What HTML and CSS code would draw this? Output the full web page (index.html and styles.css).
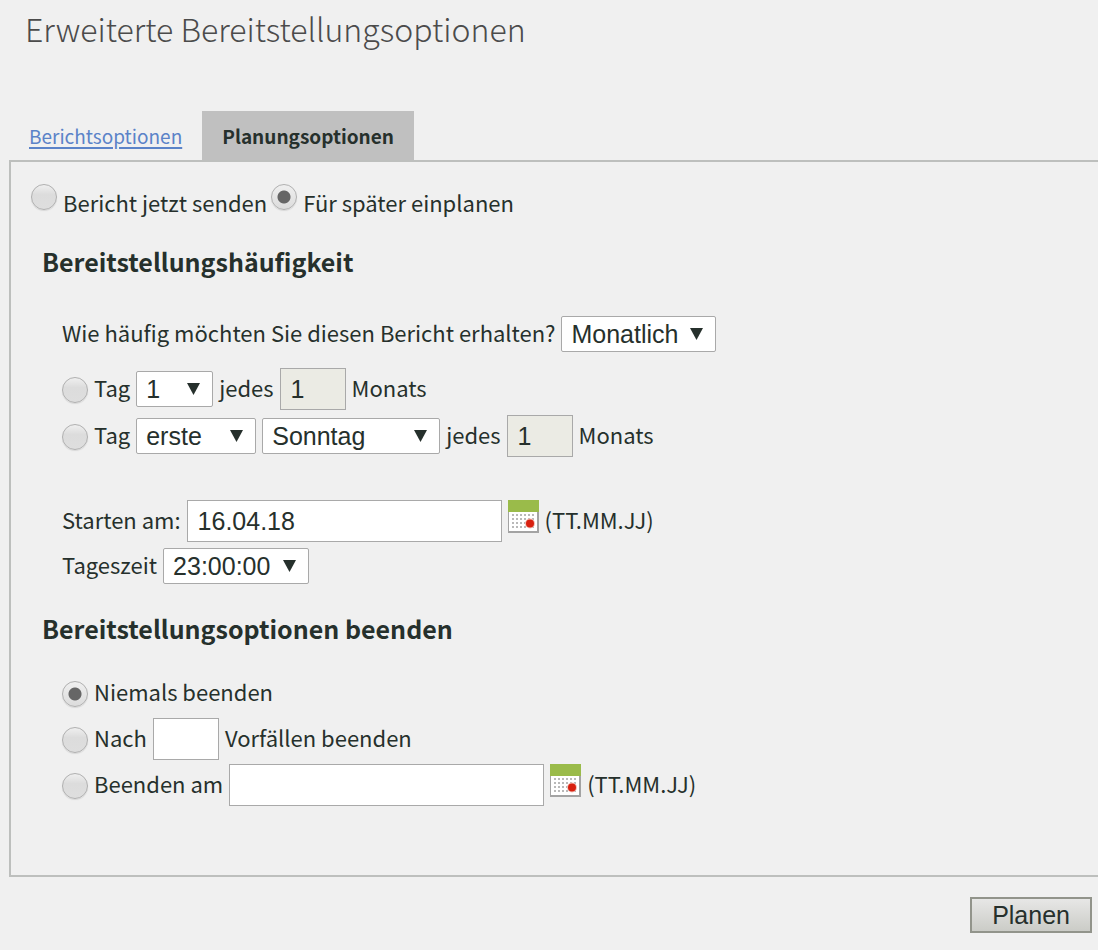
FILE: index.html
```html
<!DOCTYPE html>
<html lang="de">
<head>
<meta charset="utf-8">
<meta name="viewport" content="width=device-width, initial-scale=1">
<title>Erweiterte Bereitstellungsoptionen</title>
<link rel="stylesheet" href="styles.css">
</head>
<body>
<svg class="defs" aria-hidden="true">
  <defs>
    <pattern id="dots" x="4" y="14" width="4" height="4" patternUnits="userSpaceOnUse">
      <rect width="2" height="2" fill="#b9b9b9"/>
    </pattern>
    <symbol id="calendar" viewBox="0 0 31 33">
      <rect x="0" y="0" width="31" height="33" fill="#a3a3a3"/>
      <rect x="1" y="11" width="28" height="20" fill="#fff"/>
      <rect x="4" y="14" width="23" height="16" fill="url(#dots)"/>
      <rect x="0" y="0" width="31" height="12" fill="#9abb4a"/>
      <circle cx="22" cy="23.500" r="5" fill="#f3c0b8"/>
      <circle cx="22" cy="23.500" r="4" fill="#d8200f"/>
    </symbol>
    <symbol id="arrow" viewBox="0 0 13 12">
      <path d="M0 0h13L6.500 12z" fill="#26302c"/>
    </symbol>
  </defs>
</svg>
<main class="page">
  <h1 class="title">Erweiterte Bereitstellungsoptionen</h1>
  <nav class="tabs">
    <a class="tab" href="#bericht">Berichtsoptionen</a>
    <a class="tab tab-active" href="#planung" aria-current="page">Planungsoptionen</a>
  </nav>
  <form class="form">
    <div class="panel" id="planung">
      <div class="mode">
        <label class="choice"><input class="radio" type="radio" name="mode"><span>Bericht jetzt senden</span></label>
        <label class="choice"><input class="radio" type="radio" name="mode" checked><span>Für später einplanen</span></label>
      </div>

      <h2 class="heading">Bereitstellungshäufigkeit</h2>
      <div class="rows rows-frequency">
        <div class="row">
          <label class="text" for="interval">Wie häufig möchten Sie diesen Bericht erhalten?</label>
          <span class="picker"><select id="interval" class="select"><option>Monatlich</option></select><svg class="arrow" aria-hidden="true"><use href="#arrow"/></svg></span>
        </div>
      </div>
      <div class="rows">
        <div class="row">
          <label class="choice"><input class="radio" type="radio" name="day"><span class="text">Tag</span></label>
          <span class="picker picker-day"><select class="select" aria-label="Tag"><option>1</option></select><svg class="arrow" aria-hidden="true"><use href="#arrow"/></svg></span>
          <label class="text" for="every1">jedes</label>
          <input id="every1" class="field field-short" type="text" value="1" disabled>
          <span class="text">Monats</span>
        </div>
        <div class="row">
          <label class="choice"><input class="radio" type="radio" name="day"><span class="text">Tag</span></label>
          <span class="picker picker-order"><select class="select" aria-label="Woche"><option>erste</option></select><svg class="arrow" aria-hidden="true"><use href="#arrow"/></svg></span>
          <span class="picker picker-weekday"><select class="select" aria-label="Wochentag"><option>Sonntag</option></select><svg class="arrow" aria-hidden="true"><use href="#arrow"/></svg></span>
          <label class="text" for="every2">jedes</label>
          <input id="every2" class="field field-short" type="text" value="1" disabled>
          <span class="text">Monats</span>
        </div>
      </div>
      <div class="rows rows-start">
        <div class="row">
          <label class="text" for="start">Starten am:</label>
          <input id="start" class="field field-date" type="text" value="16.04.18">
          <button class="calendar" type="button" aria-label="Startdatum wählen"><svg class="calendar-icon" aria-hidden="true"><use href="#calendar"/></svg></button>
          <span class="text">(TT.MM.JJ)</span>
        </div>
        <div class="row">
          <label class="text" for="time">Tageszeit</label>
          <span class="picker picker-time"><select id="time" class="select"><option>23:00:00</option></select><svg class="arrow" aria-hidden="true"><use href="#arrow"/></svg></span>
        </div>
      </div>

      <h2 class="heading">Bereitstellungsoptionen beenden</h2>
      <div class="rows rows-end">
        <div class="row">
          <label class="choice"><input class="radio" type="radio" name="end" checked><span class="text">Niemals beenden</span></label>
        </div>
        <div class="row">
          <label class="choice"><input class="radio" type="radio" name="end"><span class="text">Nach</span></label>
          <input id="count" class="field field-short" type="text" value="">
          <label class="text" for="count">Vorfällen beenden</label>
        </div>
        <div class="row">
          <label class="choice"><input class="radio" type="radio" name="end"><span class="text">Beenden am</span></label>
          <input class="field field-date" type="text" value="" aria-label="Enddatum">
          <button class="calendar" type="button" aria-label="Enddatum wählen"><svg class="calendar-icon" aria-hidden="true"><use href="#calendar"/></svg></button>
          <span class="text">(TT.MM.JJ)</span>
        </div>
      </div>
    </div>
    <div class="actions">
      <button class="submit" type="submit">Planen</button>
    </div>
  </form>
</main>
</body>
</html>
```
FILE: styles.css
```css
* {
  box-sizing: border-box;
}

body {
  margin: 0;
  background: #f0f0f0;
  color: #26302c;
  font-family: "Noto Sans CJK SC", "Noto Sans", sans-serif;
  font-size: 22px;
  line-height: 32px;
}

.defs {
  display: block;
  width: 0;
  height: 0;
}

.title {
  margin: 0;
  padding: 4px 25px 0;
  color: #4b4b4b;
  font-size: 32px;
  font-weight: 300;
  line-height: 48px;
}

.tabs {
  display: flex;
  margin-top: 59px;
  padding-left: 9px;
}

.tab {
  padding: 9px 20px 8px;
  color: #5b83c8;
  font-size: 19px;
  text-decoration-thickness: 2px;
  text-underline-offset: 3px;
}

.tab-active {
  background: #c0c0c0;
  color: #26302c;
  font-weight: 700;
  text-decoration: none;
}

.panel {
  margin-left: 9px;
  padding: 22px 0 69px 20px;
  border: 2px solid #bdbfbd;
  border-right: 0;
}

.mode {
  display: flex;
  gap: 4px;
}

.mode .radio {
  margin-bottom: 10px;
}

.choice {
  display: flex;
  align-items: center;
  gap: 6px;
}

.radio {
  flex: none;
  width: 26px;
  height: 26px;
  margin: 0;
  border: 1px solid #b0b0b0;
  border-radius: 50%;
  appearance: none;
  background: linear-gradient(#efefef, #dcdcdc 40%, #dedede);
  box-shadow: 0 1px 1px #d8d8d8;
}

.radio:checked {
  background: radial-gradient(circle, #666 6px, transparent 7px), linear-gradient(#efefef, #dcdcdc);
}

.heading {
  margin: 23px 0 0 11px;
  font-size: 25px;
  font-weight: 700;
  line-height: 36px;
}

.rows {
  display: grid;
  gap: 5px;
  margin-left: 31px;
}

.rows-frequency {
  margin-top: 34px;
  margin-bottom: 13px;
}

.rows-start {
  gap: 3px;
  margin-top: 43px;
}

.rows-end {
  gap: 4px;
  margin-top: 26px;
}

.row {
  display: flex;
  align-items: center;
  gap: 6px;
  min-height: 42px;
}

.row .radio {
  margin-top: 2px;
}

.text {
  padding-bottom: 4px;
}

.picker {
  display: grid;
  align-items: center;
  width: 155px;
}

.picker-day {
  width: 77px;
}

.picker-order {
  width: 120px;
}

.picker-weekday {
  width: 178px;
}

.picker-time {
  width: 146px;
}

.select,
.arrow {
  grid-area: 1 / 1;
}

.select,
.field {
  border: 1px solid #a9a9a9;
  background: #fff;
  color: #26302c;
  font-family: "Liberation Sans", Arial, sans-serif;
  font-size: 25px;
}

.select {
  width: 100%;
  height: 36px;
  padding: 0 9px;
  border-radius: 2px;
  appearance: none;
}

.arrow {
  justify-self: end;
  width: 13px;
  height: 12px;
  margin-right: 13px;
  pointer-events: none;
}

.field {
  height: 42px;
  padding: 0 10px;
}

.field:disabled {
  background: #ebebe4;
}

.field-short {
  width: 66px;
}

.field-date {
  width: 315px;
}

.calendar {
  display: flex;
  padding: 0 0 9px;
  border: 0;
  background: none;
}

.calendar-icon {
  width: 31px;
  height: 33px;
}

.actions {
  display: flex;
  justify-content: flex-end;
  padding: 20px 6px 16px;
}

.submit {
  height: 36px;
  padding: 0 20px;
  border: 2px solid #92948b;
  background: linear-gradient(#e7e7e6, #cbccc7);
  color: #26302c;
  font-family: "Liberation Sans", Arial, sans-serif;
  font-size: 25px;
}
```
